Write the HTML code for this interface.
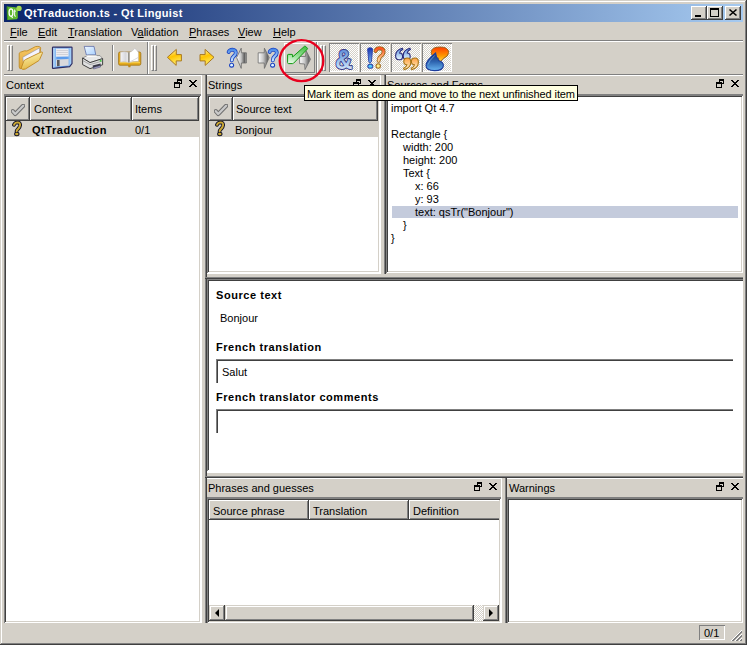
<!DOCTYPE html>
<html><head><meta charset="utf-8">
<style>
*{box-sizing:border-box;margin:0;padding:0}
html,body{width:747px;height:645px;overflow:hidden;background:#D4D0C8}
body{position:relative;font-family:"Liberation Sans",sans-serif;font-size:11px;color:#000}
.a{position:absolute}
.t{position:absolute;white-space:pre;line-height:13px}
.b{font-weight:bold;letter-spacing:0.55px}
.ln{position:absolute}
/* sunken frame: gray/dark top-left, light/white bottom-right */
.sunk{position:absolute;background:#fff;box-shadow:inset 1px 1px 0 #808080,inset -1px -1px 0 #fff,inset 2px 2px 0 #404040,inset -2px -2px 0 #D4D0C8}
.raise{position:absolute;background:#D4D0C8;box-shadow:inset -1px -1px 0 #404040,inset 1px 1px 0 #fff,inset -2px -2px 0 #808080}
.hdr{position:absolute;background:#D4D0C8;box-shadow:inset -1px -1px 0 #404040,inset 1px 1px 0 #fff,inset -2px -2px 0 #808080}
.dith{background-color:#fff;background-image:linear-gradient(45deg,#D4D0C8 25%,transparent 25%,transparent 75%,#D4D0C8 75%),linear-gradient(45deg,#D4D0C8 25%,transparent 25%,transparent 75%,#D4D0C8 75%);background-size:2px 2px;background-position:0 0,1px 1px}
.sb{box-shadow:inset -1px -1px 0 #404040,inset 1px 1px 0 #D4D0C8,inset -2px -2px 0 #808080,inset 2px 2px 0 #fff}
.chk{position:absolute;box-shadow:inset 1px 1px 0 #808080,inset -1px -1px 0 #fff}
u{text-decoration:underline;text-decoration-thickness:1px;text-underline-offset:1px}
</style></head><body>

<!-- window frame -->
<div class="a" style="left:0;top:0;width:747px;height:645px;box-shadow:inset -1px -1px 0 #404040,inset 1px 1px 0 #D4D0C8,inset -2px -2px 0 #808080,inset 2px 2px 0 #fff"></div>

<!-- title bar -->
<div class="a" style="left:4px;top:4px;width:739px;height:18px;background:linear-gradient(to right,#0A246A,#A6CAF0)"></div>
<svg class="a" style="left:4px;top:4px" width="20" height="18" viewBox="0 1 20 18">
  <path d="M2.8 3.4 L11.4 4.2 L13.8 6 L13.8 15 L12.8 16.2 L3 16.9 Z" fill="#5EB82E"/>
  <path d="M2.8 3.4 L4 3.5 L4 16.8 L3 16.9 Z" fill="#3E9020"/>
  <circle cx="15" cy="5.4" r="2.7" fill="#A6DA52"/>
  <ellipse cx="7" cy="9.6" rx="1.9" ry="3.7" fill="none" stroke="#fff" stroke-width="1.3"/>
  <path d="M7.4 13 L8.6 14.8" stroke="#fff" stroke-width="1.2"/>
  <path d="M10.6 6.6 L10.6 12.6 Q10.8 13.4 11.8 13" fill="none" stroke="#E8F0E8" stroke-width="1.1"/>
  <path d="M9.6 8.2 H12" stroke="#E8F0E8" stroke-width="1"/>
</svg>
<div class="t b" style="left:24px;top:7px;color:#fff;letter-spacing:0.33px">QtTraduction.ts - Qt Linguist</div>
<div class="raise" style="left:691px;top:6px;width:16px;height:14px"></div>
<div class="a" style="left:695px;top:15px;width:6px;height:2px;background:#000"></div>
<div class="raise" style="left:707px;top:6px;width:16px;height:14px"></div>
<div class="a" style="left:710px;top:8px;width:9px;height:9px;border:1px solid #000;border-top-width:2px"></div>
<div class="raise" style="left:725px;top:6px;width:16px;height:14px"></div>
<svg class="a" style="left:725px;top:6px" width="16" height="14" viewBox="0 0 16 14"><path d="M4.5 3.5 L11.5 9.5 M11.5 3.5 L4.5 9.5" stroke="#000" stroke-width="1.6"/></svg>

<!-- menu bar -->
<div class="t" style="left:10px;top:26px"><u>F</u>ile</div>
<div class="t" style="left:38px;top:26px"><u>E</u>dit</div>
<div class="t" style="left:68px;top:26px"><u>T</u>ranslation</div>
<div class="t" style="left:131px;top:26px">V<u>a</u>lidation</div>
<div class="t" style="left:189px;top:26px"><u>P</u>hrases</div>
<div class="t" style="left:238px;top:26px"><u>V</u>iew</div>
<div class="t" style="left:273px;top:26px"><u>H</u>elp</div>
<div class="ln" style="left:4px;top:40px;width:739px;height:1px;background:#808080"></div>
<div class="ln" style="left:4px;top:41px;width:739px;height:1px;background:#fff"></div>

<!-- toolbar -->
<div class="ln" style="left:4px;top:74px;width:739px;height:1px;background:#808080"></div>
<div class="ln" style="left:4px;top:75px;width:198px;height:1px;background:#fff"></div>
<div class="ln" style="left:207px;top:75px;width:174px;height:1px;background:#fff"></div>
<div class="ln" style="left:386px;top:75px;width:357px;height:1px;background:#fff"></div>
<div class="ln" style="left:147px;top:42px;width:1px;height:32px;background:#808080"></div>
<div class="ln" style="left:148px;top:42px;width:1px;height:32px;background:#fff"></div>
<div class="ln" style="left:316px;top:42px;width:1px;height:32px;background:#808080"></div>
<div class="ln" style="left:317px;top:42px;width:1px;height:32px;background:#fff"></div>
<!-- handles -->
<div class="a" style="left:7px;top:45px;width:3px;height:26px;border:1px solid #fff;border-right-color:#808080;border-bottom-color:#808080"></div>
<div class="a" style="left:10px;top:45px;width:3px;height:26px;border:1px solid #fff;border-right-color:#808080;border-bottom-color:#808080"></div>
<div class="a" style="left:151px;top:45px;width:3px;height:26px;border:1px solid #fff;border-right-color:#808080;border-bottom-color:#808080"></div>
<div class="a" style="left:154px;top:45px;width:3px;height:26px;border:1px solid #fff;border-right-color:#808080;border-bottom-color:#808080"></div>
<div class="a" style="left:320px;top:45px;width:3px;height:26px;border:1px solid #fff;border-right-color:#808080;border-bottom-color:#808080"></div>
<div class="a" style="left:323px;top:45px;width:3px;height:26px;border:1px solid #fff;border-right-color:#808080;border-bottom-color:#808080"></div>
<!-- separator -->
<div class="a" style="left:112px;top:45px;width:2px;height:26px;border-left:1px solid #808080;border-right:1px solid #fff"></div>

<!-- ICONS -->
<svg width="0" height="0" style="position:absolute">
<defs>
  <linearGradient id="fy" x1="0" y1="0" x2="0.3" y2="1"><stop offset="0" stop-color="#FFF6C8"/><stop offset=".5" stop-color="#F2DA80"/><stop offset="1" stop-color="#E4B848"/></linearGradient>
  <linearGradient id="fb" x1="0" y1="0" x2="0" y2="1"><stop offset="0" stop-color="#F8C868"/><stop offset="1" stop-color="#E0A838"/></linearGradient>
  <linearGradient id="ay" x1="0.2" y1="0" x2="0.5" y2="1"><stop offset="0" stop-color="#FFF4C0"/><stop offset=".45" stop-color="#FFC400"/><stop offset="1" stop-color="#FFF070"/></linearGradient>
  <linearGradient id="gr" x1="0" y1="0" x2="1" y2="0"><stop offset="0" stop-color="#FFFFFF"/><stop offset=".45" stop-color="#C8C8C8"/><stop offset=".85" stop-color="#686868"/><stop offset="1" stop-color="#A0A0A0"/></linearGradient>
  <linearGradient id="grl" x1="0" y1="0" x2="1" y2="0"><stop offset="0" stop-color="#FFFFFF"/><stop offset=".45" stop-color="#C8C8C8"/><stop offset=".8" stop-color="#606060"/><stop offset="1" stop-color="#B0B0B0"/></linearGradient>
  <linearGradient id="bq" x1="0" y1="0" x2="0" y2="1"><stop offset="0" stop-color="#4C8CE8"/><stop offset="1" stop-color="#C8E4FF"/></linearGradient>
  <linearGradient id="gc" x1="0.6" y1="0" x2="0.3" y2="1"><stop offset="0" stop-color="#48C048"/><stop offset=".55" stop-color="#98E098"/><stop offset="1" stop-color="#E4F8E4"/></linearGradient>
  <linearGradient id="amp" x1="0" y1="0" x2="0" y2="1"><stop offset="0" stop-color="#4878D0"/><stop offset=".5" stop-color="#90B8E8"/><stop offset="1" stop-color="#F0FAFF"/></linearGradient>
  <linearGradient id="exb" x1="0" y1="0" x2="0" y2="1"><stop offset="0" stop-color="#1830B0"/><stop offset="1" stop-color="#70B0F0"/></linearGradient>
  <linearGradient id="qor" x1="0" y1="0" x2="0" y2="1"><stop offset="0" stop-color="#FF5020"/><stop offset="1" stop-color="#FFD8A0"/></linearGradient>
  <linearGradient id="qb" x1="0" y1="0" x2="0" y2="1"><stop offset="0" stop-color="#5C90E0"/><stop offset="1" stop-color="#E8F8FF"/></linearGradient>
  <linearGradient id="qo" x1="0" y1="0" x2="0" y2="1"><stop offset="0" stop-color="#FFA040"/><stop offset="1" stop-color="#FFF4D0"/></linearGradient>
  <linearGradient id="or" x1="0" y1="0" x2="0" y2="1"><stop offset="0" stop-color="#FF3A00"/><stop offset=".55" stop-color="#FF9A00"/><stop offset="1" stop-color="#FFF060"/></linearGradient>
  <linearGradient id="bl" x1="0" y1="0" x2="0" y2="1"><stop offset="0" stop-color="#1A3270"/><stop offset=".5" stop-color="#2E64B0"/><stop offset="1" stop-color="#68B4F0"/></linearGradient>
  <linearGradient id="fl" x1="0" y1="0" x2="1" y2="0"><stop offset="0" stop-color="#D0ECFF"/><stop offset=".25" stop-color="#5C9CEC"/><stop offset=".75" stop-color="#5C9CEC"/><stop offset="1" stop-color="#C0E4FF"/></linearGradient>
  <linearGradient id="pp" x1="0" y1="0" x2="1" y2="1"><stop offset="0" stop-color="#F0F8FF"/><stop offset="1" stop-color="#A8D0FF"/></linearGradient>
</defs>
</svg>
<!-- folder (origin 17,44) -->
<svg class="a" style="left:17px;top:44px" width="28" height="28" viewBox="0 0 28 28">
  <path d="M2.2 9.8 Q2.2 8.6 3.4 8.2 L7.5 6.8 L10 7 L18.5 2.6 Q21 2 23.2 3 Q24 3.6 23.6 5 L22.5 14 L5 24.6 Q2.2 25.4 2.2 23 Z" fill="url(#fb)" stroke="#C08C28" stroke-width=".9"/>
  <path d="M5.8 13.2 L22.4 4 L22.6 11.5 L6.6 21.5 Z" fill="#F4F4FF" stroke="#9090A0" stroke-width=".6"/>
  <path d="M4.2 24 L6.8 17.2 Q7.3 16 8.6 15.5 L24.2 8 Q25.8 7.6 25.4 9.2 L22.6 15.6 Q22.2 16.4 21.2 17 L8.4 25 Q4.8 26.4 4.2 24 Z" fill="url(#fy)" stroke="#C08820" stroke-width=".9"/>
</svg>
<!-- floppy (origin 48,44) -->
<svg class="a" style="left:48px;top:44px" width="28" height="28" viewBox="0 0 28 28">
  <path d="M4.5 3.8 Q4.5 3.2 5.2 3.2 L23.4 3 Q24 3 24 3.6 L24 19.6 L21.6 22.6 L5.2 24.4 Q4.5 24.5 4.5 23.8 Z" fill="url(#fl)" stroke="#2C2C64" stroke-width="1.2"/>
  <path d="M8 4.6 L20.6 4.6 L20.6 12.4 L8 12.8 Z" fill="#ECECF0"/>
  <path d="M8.5 6.5 H20 M8.5 8.5 H20 M8.5 10.5 H20" stroke="#C0C0C8" stroke-width=".6"/>
  <path d="M8 15.6 L20.6 15 L20.6 21.6 L8 22.6 Z" fill="#D8D8DC"/>
  <path d="M9 16 L11.6 15.9 L11.6 22 L9 22.3 Z" fill="#5A5A60"/>
</svg>
<!-- printer (origin 79,44) -->
<svg class="a" style="left:79px;top:44px" width="28" height="28" viewBox="0 0 28 28">
  <path d="M5.2 2.4 L15 2.4 L16.8 10.8 L7.4 11 Z" fill="url(#pp)" stroke="#5060A0" stroke-width=".7"/>
  <path d="M3.6 14 L9 11.2 L21 11.6 L23.6 14.6 L11 18.6 Z" fill="#E8E8E8" stroke="#7A7A7A" stroke-width=".7"/><path d="M7 11.6 L17.4 11.4 L18 12.6 L8.6 13 Z" fill="#FFFFFF"/>
  <path d="M3.6 14 L11 18.6 L23.6 14.6 L23.6 20.8 L11 24.6 L3.6 20.6 Z" fill="#E0E0E0" stroke="#303030" stroke-width=".9"/>
  <path d="M3.8 16.6 L11 20.6 L23.4 17" stroke="#909090" stroke-width=".7" fill="none"/>
  <path d="M13.6 21.6 L21.6 19.4 L21.8 21.6 L14 23.8 Z" fill="#3A3A48"/><path d="M14.2 23.6 L21.4 21.6 L21.6 23 L14.6 25 Z" fill="#A8A8D0" stroke="#404060" stroke-width=".5"/>
  <circle cx="21.6" cy="16.8" r="1" fill="#40D040"/>
</svg>
<!-- book (origin 116,44) -->
<svg class="a" style="left:116px;top:44px" width="28" height="28" viewBox="0 0 28 28">
  <defs><linearGradient id="lp" x1="0" y1="0" x2="1" y2="0"><stop offset="0" stop-color="#F4F4F8"/><stop offset=".6" stop-color="#D8D8DC"/><stop offset="1" stop-color="#F0F0F0"/></linearGradient></defs>
  <path d="M2.6 9.4 Q2.6 8 4 8 L23.4 8 Q24.8 8 24.8 9.4 L24.8 19.8 Q24.8 21.2 23.4 21.2 L4 21.2 Q2.6 21.2 2.6 19.8 Z" fill="#E4AA1C" stroke="#A07010" stroke-width=".8"/>
  <path d="M3.6 18.6 L24 18.6" stroke="#F8D050" stroke-width="1"/>
  <path d="M4.4 8.2 Q8.6 7.2 12.8 8.4 L12.8 18.4 Q8.6 17.4 4.4 18 Z" fill="url(#lp)" stroke="#C0C0C8" stroke-width=".5"/>
  <path d="M13.2 8.4 Q16.4 7.6 18.8 4.4 Q20.8 5.8 22.4 8.4 L22.4 17.4 Q17.6 17.2 13.2 18.4 Z" fill="#FFFFFF" stroke="#B8B8C0" stroke-width=".5"/>
  <path d="M14.4 17.6 Q18.4 15.6 22 13.6" stroke="#C8C8D0" stroke-width=".7" fill="none"/>
  <path d="M12.9 8.4 L12.9 18.4" stroke="#606060" stroke-width=".9"/>
  <path d="M12 21 L14.8 21 L14.4 23.2 L12.4 23.2 Z" fill="#C08818"/>
</svg>
<!-- back arrow (origin 164,46) -->
<svg class="a" style="left:164px;top:46px" width="22" height="24" viewBox="0 0 22 24">
  <path d="M3.4 11.3 L12.3 3.4 L12.3 8.6 L17.4 8.6 L17.4 14.9 L12.2 14.9 L12.2 19.4 Z" fill="url(#ay)" stroke="#A87820" stroke-width="1" stroke-linejoin="round"/>
</svg>
<!-- forward arrow (origin 195,46) -->
<svg class="a" style="left:195px;top:46px" width="22" height="24" viewBox="0 0 22 24">
  <path d="M19 11.3 L10.1 3.4 L10.1 8.6 L5 8.6 L5 14.9 L10.2 14.9 L10.2 19.4 Z" fill="url(#ay)" stroke="#A87820" stroke-width="1" stroke-linejoin="round"/>
</svg>
<!-- ?< (origin 224,44) -->
<svg class="a" style="left:224px;top:44px" width="28" height="28" viewBox="0 0 28 28">
  <path d="M12.6 13.6 L17.2 4.2 L17.4 8.8 L22.4 8.8 L22.4 19 L17.4 19 L17.2 24.4 Z" fill="url(#grl)" stroke="#6A6A6A" stroke-width=".8" stroke-linejoin="round"/>
  <path d="M4.6 8 Q5.6 5.6 8.4 5.6 Q11.8 5.8 11.8 8.8 Q11.8 10.8 9.6 12.4 Q8 13.6 7.8 16.4" fill="none" stroke="#1840C0" stroke-width="3.8" stroke-linecap="round"/>
  <path d="M4.6 8 Q5.6 5.6 8.4 5.6 Q11.8 5.8 11.8 8.8 Q11.8 10.8 9.6 12.4 Q8 13.6 7.8 16.4" fill="none" stroke="url(#bq)" stroke-width="2.2" stroke-linecap="round"/>
  <circle cx="7.6" cy="21.2" r="2.5" fill="#1840C0"/><circle cx="7.6" cy="21.2" r="1.4" fill="#E0F4FF"/>
</svg>
<!-- >? (origin 255,44) -->
<svg class="a" style="left:255px;top:44px" width="28" height="28" viewBox="0 0 28 28">
  <path d="M14.2 13.6 L9.4 4.2 L9.2 8.8 L3.2 8.8 L3.2 19 L9.2 19 L9.4 24.4 Z" fill="url(#gr)" stroke="#6A6A6A" stroke-width=".8" stroke-linejoin="round"/>
  <path d="M14.6 8 Q15.6 5.6 18.4 5.6 Q21.8 5.8 21.8 8.8 Q21.8 10.8 19.6 12.4 Q18 13.6 17.8 16.4" fill="none" stroke="#1840C0" stroke-width="3.8" stroke-linecap="round"/>
  <path d="M14.6 8 Q15.6 5.6 18.4 5.6 Q21.8 5.8 21.8 8.8 Q21.8 10.8 19.6 12.4 Q18 13.6 17.8 16.4" fill="none" stroke="url(#bq)" stroke-width="2.2" stroke-linecap="round"/>
  <circle cx="17.6" cy="21.2" r="2.5" fill="#1840C0"/><circle cx="17.6" cy="21.2" r="1.4" fill="#E0F4FF"/>
</svg>
<!-- mark done button (hovered) -->
<div class="a" style="left:284px;top:43px;width:31px;height:30px;box-shadow:inset 1px 1px 0 #fff,inset -1px -1px 0 #808080"></div>
<svg class="a" style="left:283px;top:42px" width="34" height="34" viewBox="0 0 34 34">
  <path d="M27.5 17.2 L23 8.6 L22.6 14.4 L16.6 14.6 L16.6 21.6 L21.6 22 L22 27.6 Z" fill="url(#gr)" stroke="#6A6A6A" stroke-width=".8" stroke-linejoin="round"/>
  <path d="M4.6 13 Q4.6 12.4 5.2 12.4 L9 12.4 Q9.6 12.4 9.6 13 L9.6 15 L21.6 4.2 Q22 3.9 22.4 4.2 L24.4 6.2 Q24.7 6.6 24.4 7 L10.6 21.2 Q10.2 21.6 9.6 21.6 L5.6 21.6 Q4.6 21.6 4.6 20.6 Z" fill="url(#gc)" stroke="#109A10" stroke-width="1"/>
</svg>
<!-- checked buttons -->
<div class="chk dith" style="left:329px;top:43px;width:30px;height:29px"></div>
<div class="chk dith" style="left:360px;top:43px;width:30px;height:29px"></div>
<div class="chk dith" style="left:391px;top:43px;width:30px;height:29px"></div>
<div class="chk dith" style="left:422px;top:43px;width:30px;height:29px"></div>
<!-- & (origin 327,41) -->
<svg class="a" style="left:327px;top:41px" width="34" height="34" viewBox="0 0 34 34">
  <text x="8" y="23.6" transform="scale(1.04,1.17)" font-family="Liberation Sans" font-weight="bold" font-size="23" fill="url(#amp)" stroke="#383A86" stroke-width="1.7" paint-order="stroke" stroke-linejoin="round">&amp;</text>
</svg>
<!-- !? (origin 358,41) -->
<svg class="a" style="left:358px;top:41px" width="34" height="34" viewBox="0 0 34 34">
  <path d="M9.6 8 Q9.8 6.8 12 6.8 Q14.4 6.8 14.6 8 L13.4 20.8 Q13 21.6 12 21.6 Q11 21.6 10.8 20.8 Z" fill="url(#exb)" stroke="#2A40A8" stroke-width=".9"/>
  <ellipse cx="12.3" cy="25.2" rx="3" ry="2.6" fill="#3050B0"/><ellipse cx="12.3" cy="25.2" rx="1.8" ry="1.5" fill="#50D0FF"/>
  <path d="M17.6 10 Q18.6 7.2 21.6 7.2 Q25.8 7.4 25.6 11 Q25.4 13.6 22.6 15.4 Q20.8 16.8 20.6 19.8" fill="none" stroke="#A06818" stroke-width="4" stroke-linecap="round"/>
  <path d="M17.6 10 Q18.6 7.2 21.6 7.2 Q25.8 7.4 25.6 11 Q25.4 13.6 22.6 15.4 Q20.8 16.8 20.6 19.8" fill="none" stroke="url(#qor)" stroke-width="2.2" stroke-linecap="round"/>
  <circle cx="20.2" cy="25" r="2.7" fill="#A06818"/><circle cx="20.2" cy="25" r="1.7" fill="#FFF090"/>
</svg>
<!-- quotes (origin 389,41) -->
<svg class="a" style="left:389px;top:41px" width="34" height="34" viewBox="0 0 34 34">
  <g id="q66" stroke="#2A2A7A" stroke-width="1.1" fill="url(#qb)">
  <path d="M13.2 7.2 Q6.6 8.8 6.6 14.8 Q6.6 18.8 10 18.8 Q13.6 18.8 13.6 15.4 Q13.6 12.2 10.6 12 Q11 9.8 13.8 8.6 Z"/>
  <path d="M20.8 7.2 Q14.2 8.8 14.2 14.8 Q14.2 18.8 17.6 18.8 Q21.2 18.8 21.2 15.4 Q21.2 12.2 18.2 12 Q18.6 9.8 21.4 8.6 Z"/>
  </g>
  <g stroke="#A87414" stroke-width="1.1" fill="url(#qo)">
  <path d="M15.2 28.6 Q21.8 27 21.8 21 Q21.8 17 18.4 17 Q14.8 17 14.8 20.4 Q14.8 23.6 17.8 23.8 Q17.4 26 14.6 27.2 Z"/>
  <path d="M22.8 28.6 Q29.4 27 29.4 21 Q29.4 17 26 17 Q22.4 17 22.4 20.4 Q22.4 23.6 25.4 23.8 Q25 26 22.2 27.2 Z"/>
  </g>
</svg>
<!-- swirl (origin 420,41) -->
<svg class="a" style="left:420px;top:41px" width="34" height="34" viewBox="0 0 34 34">
  <path d="M11.2 11.6 Q11.2 6 19.8 6 Q28.6 6 28.6 11.4 Q28.6 15.4 23.2 17.6 L18.8 22.4 L18.6 17 Q11.2 16 11.2 11.6 Z" fill="url(#or)" stroke="#9A6420" stroke-width="1"/>
  <path d="M15.6 12 Q16 16.6 18.6 19.4 Q23.6 21 23.4 24.6 Q23 29.6 14.6 29.6 Q6 29.6 6 24.6 Q6 19.6 15.6 12 Z" fill="url(#bl)" stroke="#1C3C9C" stroke-width="1.1"/>
  <path d="M14.8 14.4 Q9 19.6 8.2 23.4" stroke="#A0D0FF" stroke-width=".7" fill="none" opacity=".7"/>
</svg>

<!-- ============ DOCKS ============ -->
<!-- separators -->
<div class="ln" style="left:201px;top:75px;width:1px;height:548px;background:#fff"></div>
<div class="ln" style="left:205px;top:75px;width:1px;height:548px;background:#808080"></div>
<div class="ln" style="left:206px;top:75px;width:1px;height:548px;background:#404040"></div>
<div class="ln" style="left:380px;top:75px;width:1px;height:199px;background:#fff"></div>
<div class="ln" style="left:384px;top:75px;width:1px;height:199px;background:#808080"></div>
<div class="ln" style="left:385px;top:75px;width:1px;height:199px;background:#404040"></div>
<div class="ln" style="left:207px;top:273px;width:174px;height:1px;background:#fff"></div>
<div class="ln" style="left:205px;top:277px;width:538px;height:1px;background:#808080"></div>
<div class="ln" style="left:205px;top:278px;width:538px;height:1px;background:#404040"></div>
<div class="ln" style="left:205px;top:476px;width:538px;height:1px;background:#808080"></div>
<div class="ln" style="left:205px;top:477px;width:538px;height:1px;background:#404040"></div>
<div class="ln" style="left:207px;top:478px;width:295px;height:1px;background:#fff"></div>
<div class="ln" style="left:507px;top:478px;width:236px;height:1px;background:#fff"></div>
<div class="ln" style="left:501px;top:478px;width:1px;height:145px;background:#fff"></div>
<div class="ln" style="left:505px;top:478px;width:1px;height:145px;background:#808080"></div>
<div class="ln" style="left:506px;top:478px;width:1px;height:145px;background:#404040"></div>
<!-- gray lines under titles -->
<div class="ln" style="left:4px;top:94px;width:197px;height:1px;background:#808080"></div>
<div class="ln" style="left:207px;top:94px;width:173px;height:1px;background:#808080"></div>
<div class="ln" style="left:386px;top:94px;width:357px;height:1px;background:#808080"></div>
<div class="ln" style="left:207px;top:497px;width:294px;height:1px;background:#808080"></div>
<div class="ln" style="left:507px;top:497px;width:236px;height:1px;background:#808080"></div>

<!-- Context dock -->
<div class="t" style="left:6px;top:79px">Context</div>
<svg class="a fl" style="left:174px;top:79px" width="8" height="9" viewBox="0 0 8 9"><g fill="#000" shape-rendering="crispEdges"><rect x="3" y="0" width="5" height="2"/><rect x="3" y="2" width="1" height="1"/><rect x="7" y="2" width="1" height="3"/><rect x="6" y="4" width="1" height="1"/><rect x="0" y="3" width="6" height="2"/><rect x="0" y="5" width="1" height="4"/><rect x="5" y="5" width="1" height="4"/><rect x="0" y="8" width="6" height="1"/></g></svg>
<svg class="a" style="left:189px;top:80px" width="8" height="7" viewBox="0 0 8 7"><g fill="#000" shape-rendering="crispEdges"><rect x="0" y="0" width="1" height="1"/><rect x="1" y="0" width="1" height="1"/><rect x="6" y="0" width="1" height="1"/><rect x="7" y="0" width="1" height="1"/><rect x="1" y="1" width="1" height="1"/><rect x="2" y="1" width="1" height="1"/><rect x="5" y="1" width="1" height="1"/><rect x="6" y="1" width="1" height="1"/><rect x="2" y="2" width="1" height="1"/><rect x="3" y="2" width="1" height="1"/><rect x="4" y="2" width="1" height="1"/><rect x="5" y="2" width="1" height="1"/><rect x="3" y="3" width="1" height="1"/><rect x="4" y="3" width="1" height="1"/><rect x="2" y="4" width="1" height="1"/><rect x="3" y="4" width="1" height="1"/><rect x="4" y="4" width="1" height="1"/><rect x="5" y="4" width="1" height="1"/><rect x="1" y="5" width="1" height="1"/><rect x="2" y="5" width="1" height="1"/><rect x="5" y="5" width="1" height="1"/><rect x="6" y="5" width="1" height="1"/><rect x="0" y="6" width="1" height="1"/><rect x="1" y="6" width="1" height="1"/><rect x="6" y="6" width="1" height="1"/><rect x="7" y="6" width="1" height="1"/></g></svg>
<div class="sunk" style="left:4px;top:95px;width:197px;height:528px"></div>
<div class="hdr" style="left:6px;top:97px;width:24px;height:24px"></div>
<div class="hdr" style="left:30px;top:97px;width:102px;height:24px"></div>
<div class="hdr" style="left:132px;top:97px;width:67px;height:24px"></div>
<svg class="a ck" style="left:11px;top:104px" width="14" height="13" viewBox="0 0 14 13"><path d="M1.8 7.2 L4.2 10 L12.2 1.8" fill="none" stroke="#6E6E6E" stroke-width="4.2" stroke-linecap="round" stroke-linejoin="round"/><path d="M1.8 7.2 L4.2 10 L12.2 1.8" fill="none" stroke="#CACACA" stroke-width="2.2" stroke-linecap="round" stroke-linejoin="round"/></svg>
<div class="t" style="left:34px;top:103px">Context</div>
<div class="t" style="left:135px;top:103px">Items</div>
<div class="a" style="left:6px;top:121px;width:193px;height:16px;background:#D4D0C8"></div>
<svg class="a qm" style="left:12px;top:121px" width="10" height="16" viewBox="0 0 10 16"><path d="M2 3.8 Q3 1.4 5.6 1.4 Q8.3 1.6 8.1 4.2 Q7.9 6.2 6 8 Q4.8 9.2 4.6 10.2" fill="none" stroke="#141428" stroke-width="3.8" stroke-linecap="round"/><ellipse cx="4.8" cy="13" rx="2.7" ry="2.2" fill="#141428"/><path d="M2 3.8 Q3 1.4 5.6 1.4 Q8.3 1.6 8.1 4.2 Q7.9 6.2 6 8 Q4.8 9.2 4.6 10.2" fill="none" stroke="#CCA832" stroke-width="1.9" stroke-linecap="round"/><ellipse cx="4.8" cy="13" rx="1.7" ry="1.2" fill="#CCA832"/></svg>
<div class="t b" style="left:32px;top:124px">QtTraduction</div>
<div class="t" style="left:135px;top:124px">0/1</div>

<!-- Strings dock -->
<div class="t" style="left:208px;top:79px">Strings</div>
<svg class="a" style="left:353px;top:79px" width="8" height="9" viewBox="0 0 8 9"><g fill="#000" shape-rendering="crispEdges"><rect x="3" y="0" width="5" height="2"/><rect x="3" y="2" width="1" height="1"/><rect x="7" y="2" width="1" height="3"/><rect x="6" y="4" width="1" height="1"/><rect x="0" y="3" width="6" height="2"/><rect x="0" y="5" width="1" height="4"/><rect x="5" y="5" width="1" height="4"/><rect x="0" y="8" width="6" height="1"/></g></svg>
<svg class="a" style="left:368px;top:80px" width="8" height="7" viewBox="0 0 8 7"><g fill="#000" shape-rendering="crispEdges"><rect x="0" y="0" width="1" height="1"/><rect x="1" y="0" width="1" height="1"/><rect x="6" y="0" width="1" height="1"/><rect x="7" y="0" width="1" height="1"/><rect x="1" y="1" width="1" height="1"/><rect x="2" y="1" width="1" height="1"/><rect x="5" y="1" width="1" height="1"/><rect x="6" y="1" width="1" height="1"/><rect x="2" y="2" width="1" height="1"/><rect x="3" y="2" width="1" height="1"/><rect x="4" y="2" width="1" height="1"/><rect x="5" y="2" width="1" height="1"/><rect x="3" y="3" width="1" height="1"/><rect x="4" y="3" width="1" height="1"/><rect x="2" y="4" width="1" height="1"/><rect x="3" y="4" width="1" height="1"/><rect x="4" y="4" width="1" height="1"/><rect x="5" y="4" width="1" height="1"/><rect x="1" y="5" width="1" height="1"/><rect x="2" y="5" width="1" height="1"/><rect x="5" y="5" width="1" height="1"/><rect x="6" y="5" width="1" height="1"/><rect x="0" y="6" width="1" height="1"/><rect x="1" y="6" width="1" height="1"/><rect x="6" y="6" width="1" height="1"/><rect x="7" y="6" width="1" height="1"/></g></svg>
<div class="sunk" style="left:207px;top:95px;width:173px;height:178px"></div>
<div class="hdr" style="left:209px;top:97px;width:24px;height:24px"></div>
<div class="hdr" style="left:233px;top:97px;width:145px;height:24px"></div>
<svg class="a" style="left:214px;top:104px" width="14" height="13" viewBox="0 0 14 13"><path d="M1.8 7.2 L4.2 10 L12.2 1.8" fill="none" stroke="#6E6E6E" stroke-width="4.2" stroke-linecap="round" stroke-linejoin="round"/><path d="M1.8 7.2 L4.2 10 L12.2 1.8" fill="none" stroke="#CACACA" stroke-width="2.2" stroke-linecap="round" stroke-linejoin="round"/></svg>
<div class="t" style="left:236px;top:103px">Source text</div>
<div class="a" style="left:209px;top:121px;width:169px;height:16px;background:#D4D0C8"></div>
<svg class="a" style="left:215px;top:121px" width="10" height="16" viewBox="0 0 10 16"><path d="M2 3.8 Q3 1.4 5.6 1.4 Q8.3 1.6 8.1 4.2 Q7.9 6.2 6 8 Q4.8 9.2 4.6 10.2" fill="none" stroke="#141428" stroke-width="3.8" stroke-linecap="round"/><ellipse cx="4.8" cy="13" rx="2.7" ry="2.2" fill="#141428"/><path d="M2 3.8 Q3 1.4 5.6 1.4 Q8.3 1.6 8.1 4.2 Q7.9 6.2 6 8 Q4.8 9.2 4.6 10.2" fill="none" stroke="#CCA832" stroke-width="1.9" stroke-linecap="round"/><ellipse cx="4.8" cy="13" rx="1.7" ry="1.2" fill="#CCA832"/></svg>
<div class="t" style="left:235px;top:124px">Bonjour</div>

<!-- Sources and Forms -->
<div class="t" style="left:387px;top:79px">Sources and Forms</div>
<svg class="a" style="left:716px;top:79px" width="8" height="9" viewBox="0 0 8 9"><g fill="#000" shape-rendering="crispEdges"><rect x="3" y="0" width="5" height="2"/><rect x="3" y="2" width="1" height="1"/><rect x="7" y="2" width="1" height="3"/><rect x="6" y="4" width="1" height="1"/><rect x="0" y="3" width="6" height="2"/><rect x="0" y="5" width="1" height="4"/><rect x="5" y="5" width="1" height="4"/><rect x="0" y="8" width="6" height="1"/></g></svg>
<svg class="a" style="left:731px;top:80px" width="8" height="7" viewBox="0 0 8 7"><g fill="#000" shape-rendering="crispEdges"><rect x="0" y="0" width="1" height="1"/><rect x="1" y="0" width="1" height="1"/><rect x="6" y="0" width="1" height="1"/><rect x="7" y="0" width="1" height="1"/><rect x="1" y="1" width="1" height="1"/><rect x="2" y="1" width="1" height="1"/><rect x="5" y="1" width="1" height="1"/><rect x="6" y="1" width="1" height="1"/><rect x="2" y="2" width="1" height="1"/><rect x="3" y="2" width="1" height="1"/><rect x="4" y="2" width="1" height="1"/><rect x="5" y="2" width="1" height="1"/><rect x="3" y="3" width="1" height="1"/><rect x="4" y="3" width="1" height="1"/><rect x="2" y="4" width="1" height="1"/><rect x="3" y="4" width="1" height="1"/><rect x="4" y="4" width="1" height="1"/><rect x="5" y="4" width="1" height="1"/><rect x="1" y="5" width="1" height="1"/><rect x="2" y="5" width="1" height="1"/><rect x="5" y="5" width="1" height="1"/><rect x="6" y="5" width="1" height="1"/><rect x="0" y="6" width="1" height="1"/><rect x="1" y="6" width="1" height="1"/><rect x="6" y="6" width="1" height="1"/><rect x="7" y="6" width="1" height="1"/></g></svg>
<div class="sunk" style="left:386px;top:95px;width:357px;height:178px"></div>
<div class="a" style="left:392px;top:206px;width:346px;height:12px;background:#C4CBDC"></div>
<div class="t" style="left:391px;top:102px">import Qt 4.7</div>
<div class="t" style="left:391px;top:128px">Rectangle {</div>
<div class="t" style="left:403px;top:141px">width: 200</div>
<div class="t" style="left:403px;top:154px">height: 200</div>
<div class="t" style="left:403px;top:167px">Text {</div>
<div class="t" style="left:415px;top:180px">x: 66</div>
<div class="t" style="left:415px;top:193px">y: 93</div>
<div class="t" style="left:415px;top:206px">text: qsTr("Bonjour")</div>
<div class="t" style="left:403px;top:219px">}</div>
<div class="t" style="left:391px;top:232px">}</div>

<!-- Editor -->
<div class="a" style="left:207px;top:279px;width:536px;height:194px;background:#fff"></div>
<div class="ln" style="left:207px;top:279px;width:536px;height:1px;background:#808080"></div>
<div class="ln" style="left:208px;top:280px;width:535px;height:1px;background:#404040"></div>
<div class="ln" style="left:207px;top:279px;width:1px;height:192px;background:#808080"></div>
<div class="ln" style="left:208px;top:280px;width:1px;height:190px;background:#404040"></div>
<div class="t b" style="left:216px;top:289px">Source text</div>
<div class="t" style="left:220px;top:312px">Bonjour</div>
<div class="t b" style="left:216px;top:341px">French translation</div>
<div class="a" style="left:216px;top:359px;width:517px;height:24px;box-shadow:inset 1px 1px 0 #808080,inset 2px 2px 0 #404040"></div>
<div class="t" style="left:222px;top:366px">Salut</div>
<div class="t b" style="left:216px;top:391px">French translator comments</div>
<div class="a" style="left:216px;top:409px;width:517px;height:24px;box-shadow:inset 1px 1px 0 #808080,inset 2px 2px 0 #404040"></div>

<!-- Phrases -->
<div class="t" style="left:208px;top:482px">Phrases and guesses</div>
<svg class="a" style="left:474px;top:482px" width="8" height="9" viewBox="0 0 8 9"><g fill="#000" shape-rendering="crispEdges"><rect x="3" y="0" width="5" height="2"/><rect x="3" y="2" width="1" height="1"/><rect x="7" y="2" width="1" height="3"/><rect x="6" y="4" width="1" height="1"/><rect x="0" y="3" width="6" height="2"/><rect x="0" y="5" width="1" height="4"/><rect x="5" y="5" width="1" height="4"/><rect x="0" y="8" width="6" height="1"/></g></svg>
<svg class="a" style="left:489px;top:483px" width="8" height="7" viewBox="0 0 8 7"><g fill="#000" shape-rendering="crispEdges"><rect x="0" y="0" width="1" height="1"/><rect x="1" y="0" width="1" height="1"/><rect x="6" y="0" width="1" height="1"/><rect x="7" y="0" width="1" height="1"/><rect x="1" y="1" width="1" height="1"/><rect x="2" y="1" width="1" height="1"/><rect x="5" y="1" width="1" height="1"/><rect x="6" y="1" width="1" height="1"/><rect x="2" y="2" width="1" height="1"/><rect x="3" y="2" width="1" height="1"/><rect x="4" y="2" width="1" height="1"/><rect x="5" y="2" width="1" height="1"/><rect x="3" y="3" width="1" height="1"/><rect x="4" y="3" width="1" height="1"/><rect x="2" y="4" width="1" height="1"/><rect x="3" y="4" width="1" height="1"/><rect x="4" y="4" width="1" height="1"/><rect x="5" y="4" width="1" height="1"/><rect x="1" y="5" width="1" height="1"/><rect x="2" y="5" width="1" height="1"/><rect x="5" y="5" width="1" height="1"/><rect x="6" y="5" width="1" height="1"/><rect x="0" y="6" width="1" height="1"/><rect x="1" y="6" width="1" height="1"/><rect x="6" y="6" width="1" height="1"/><rect x="7" y="6" width="1" height="1"/></g></svg>
<div class="sunk" style="left:207px;top:498px;width:294px;height:125px"></div>
<div class="hdr" style="left:209px;top:500px;width:100px;height:20px"></div>
<div class="hdr" style="left:309px;top:500px;width:100px;height:20px"></div>
<div class="hdr" style="left:409px;top:500px;width:90px;height:20px;box-shadow:inset 0 -1px 0 #404040,inset 1px 1px 0 #fff,inset 0 -2px 0 #808080"></div>
<div class="t" style="left:213px;top:505px">Source phrase</div>
<div class="t" style="left:313px;top:505px">Translation</div>
<div class="t" style="left:413px;top:505px">Definition</div>
<!-- scrollbar -->
<div class="a dith" style="left:209px;top:605px;width:290px;height:16px"></div>
<div class="raise sb" style="left:209px;top:605px;width:16px;height:16px"></div>
<div class="raise sb" style="left:225px;top:605px;width:249px;height:16px"></div>
<div class="raise sb" style="left:483px;top:605px;width:16px;height:16px"></div>
<svg class="a" style="left:209px;top:605px" width="16" height="16"><path d="M6 8 L10 4 L10 12 Z" fill="#000"/></svg>
<svg class="a" style="left:483px;top:605px" width="16" height="16"><path d="M10 8 L6 4 L6 12 Z" fill="#000"/></svg>

<!-- Warnings -->
<div class="t" style="left:509px;top:482px">Warnings</div>
<svg class="a" style="left:716px;top:482px" width="8" height="9" viewBox="0 0 8 9"><g fill="#000" shape-rendering="crispEdges"><rect x="3" y="0" width="5" height="2"/><rect x="3" y="2" width="1" height="1"/><rect x="7" y="2" width="1" height="3"/><rect x="6" y="4" width="1" height="1"/><rect x="0" y="3" width="6" height="2"/><rect x="0" y="5" width="1" height="4"/><rect x="5" y="5" width="1" height="4"/><rect x="0" y="8" width="6" height="1"/></g></svg>
<svg class="a" style="left:731px;top:483px" width="8" height="7" viewBox="0 0 8 7"><g fill="#000" shape-rendering="crispEdges"><rect x="0" y="0" width="1" height="1"/><rect x="1" y="0" width="1" height="1"/><rect x="6" y="0" width="1" height="1"/><rect x="7" y="0" width="1" height="1"/><rect x="1" y="1" width="1" height="1"/><rect x="2" y="1" width="1" height="1"/><rect x="5" y="1" width="1" height="1"/><rect x="6" y="1" width="1" height="1"/><rect x="2" y="2" width="1" height="1"/><rect x="3" y="2" width="1" height="1"/><rect x="4" y="2" width="1" height="1"/><rect x="5" y="2" width="1" height="1"/><rect x="3" y="3" width="1" height="1"/><rect x="4" y="3" width="1" height="1"/><rect x="2" y="4" width="1" height="1"/><rect x="3" y="4" width="1" height="1"/><rect x="4" y="4" width="1" height="1"/><rect x="5" y="4" width="1" height="1"/><rect x="1" y="5" width="1" height="1"/><rect x="2" y="5" width="1" height="1"/><rect x="5" y="5" width="1" height="1"/><rect x="6" y="5" width="1" height="1"/><rect x="0" y="6" width="1" height="1"/><rect x="1" y="6" width="1" height="1"/><rect x="6" y="6" width="1" height="1"/><rect x="7" y="6" width="1" height="1"/></g></svg>
<div class="sunk" style="left:507px;top:498px;width:236px;height:125px"></div>

<!-- status bar -->
<div class="a" style="left:699px;top:625px;width:26px;height:15px;box-shadow:inset 1px 1px 0 #808080,inset -1px -1px 0 #fff"></div>
<div class="t" style="left:704px;top:627px">0/1</div>
<svg class="a" style="left:729px;top:628px" width="14" height="14" viewBox="0 0 14 14"><path d="M13 2 L2 13 M13 6 L6 13 M13 10 L10 13" stroke="#fff" stroke-width="1"/><path d="M13 3 L3 13 M13 4 L4 13 M13 7 L7 13 M13 8 L8 13 M13 11 L11 13 M13 12 L12 13" stroke="#808080" stroke-width="1"/></svg>

<!-- tooltip -->
<div class="a" style="left:304px;top:85px;width:274px;height:16px;background:#FFFFE1;border:1px solid #000"></div>
<div class="t" style="left:307px;top:88px;letter-spacing:-0.1px">Mark item as done and move to the next unfinished item</div>

<!-- red circle -->
<svg class="a" style="left:277px;top:37px" width="50" height="48" viewBox="0 0 50 48"><ellipse cx="24.5" cy="23.7" rx="21.8" ry="20.5" fill="none" stroke="#E8001E" stroke-width="2.3"/></svg>

</body></html>
